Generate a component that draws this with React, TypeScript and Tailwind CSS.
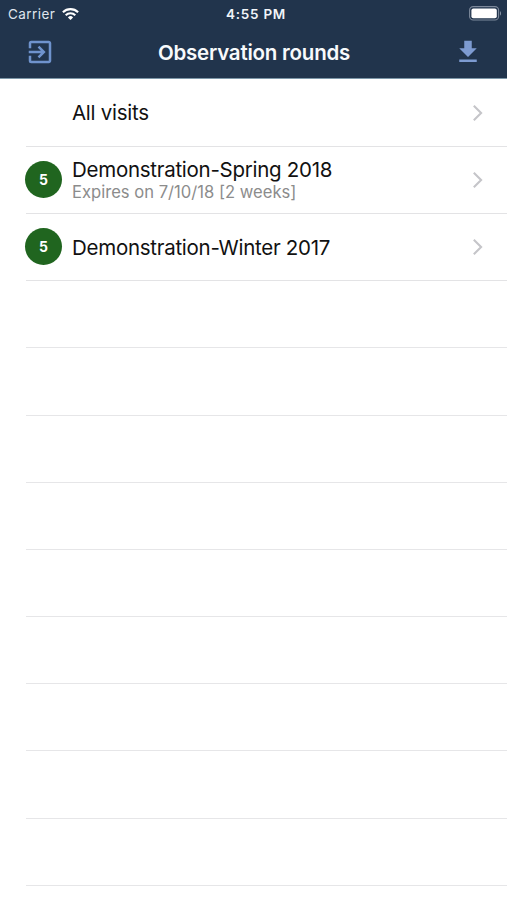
import { MdExitToApp, MdFileDownload } from 'react-icons/md';

interface Round {
  id: string;
  title: string;
  subtitle?: string;
  count?: number;
}

const rounds: Round[] = [
  { id: 'all', title: 'All visits' },
  {
    id: 'spring-2018',
    title: 'Demonstration-Spring 2018',
    subtitle: 'Expires on 7/10/18 [2 weeks]',
    count: 5,
  },
  { id: 'winter-2017', title: 'Demonstration-Winter 2017', count: 5 },
];

// The table keeps drawing separators below the last round
const EMPTY_ROWS = 9;

function WifiIcon() {
  return (
    <svg width="17" height="12" viewBox="0 0 17 12" fill="none" stroke="#fff" strokeWidth="2.1">
      <path d="M0.9 4.3a10.8 10.8 0 0 1 15.2 0" />
      <path d="M3.7 7.3a6.8 6.8 0 0 1 9.6 0" />
      <path d="M8.5 12L5.9 9.4a3.7 3.7 0 0 1 5.2 0z" fill="#fff" stroke="none" />
    </svg>
  );
}

function BatteryIcon() {
  return (
    <svg width="34" height="15" viewBox="0 0 34 15" fill="none">
      <rect x="0.6" y="0.6" width="29" height="13.4" rx="3.6" stroke="#7d899b" strokeWidth="1.1" />
      <rect x="2.4" y="2.4" width="25.4" height="9.8" rx="2" fill="#fff" />
      <path d="M31 5.2c1.3.5 1.3 3.9 0 4.4z" fill="#8b97a8" />
    </svg>
  );
}

function Chevron() {
  return (
    <svg width="12" height="18" viewBox="0 0 12 18" fill="none" className="shrink-0">
      <path d="M1.8 1.8L9.1 9l-7.3 7.2" stroke="#c5c5c9" strokeWidth="2.1" />
    </svg>
  );
}

function StatusBar() {
  return (
    <div className="grid h-[27px] grid-cols-3 items-center text-[13.5px] leading-none">
      <div className="flex items-center gap-[7px] pl-[8px] text-[#dfe5ed]">
        <span className="pt-[2px] tracking-[0.45px]">Carrier</span>
        <WifiIcon />
      </div>
      <div className="pt-[2px] pl-[5px] text-center text-[13.5px] font-semibold tracking-[0.75px] text-[#f2f5f9]">
        4:55 PM
      </div>
      <div className="flex justify-end pr-[4px]">
        <BatteryIcon />
      </div>
    </div>
  );
}

function NavBar() {
  return (
    <div className="flex h-[51px] items-center justify-between pr-[24px] pl-[25px]">
      <button aria-label="Log out" className="pb-[2px]">
        <MdExitToApp className="size-[30px] text-[#6f93cd]" />
      </button>
      <h1 className="pt-[2px] text-[20.5px] font-semibold tracking-[-0.22px] text-[#f8fafc]">
        Observation rounds
      </h1>
      <button aria-label="Download" className="pb-[2px]">
        <MdFileDownload className="size-[30px] text-[#7d9bd1]" />
      </button>
    </div>
  );
}

function RoundRow({ round }: { round: Round }) {
  return (
    <li className="flex h-[67.2px] items-center border-b border-[#e3e3e5] pr-[23px]">
      <div className="w-[46px] shrink-0 pb-[1.5px]">
        {round.count !== undefined && (
          <div className="-ml-px flex size-[37px] items-center justify-center rounded-full bg-[#20651f] text-[14px] font-bold text-white">
            {round.count}
          </div>
        )}
      </div>
      <div className="min-w-0 flex-1 pt-px whitespace-nowrap">
        <p className="text-[20.5px] leading-[24px] tracking-[-0.27px] text-[#111]">
          {round.title}
        </p>
        {round.subtitle && (
          <p className="text-[16.6px] leading-[20px] text-[#8c8c8c]">{round.subtitle}</p>
        )}
      </div>
      <Chevron />
    </li>
  );
}

export default function App() {
  return (
    <div className="h-[900px] w-full overflow-hidden bg-white font-['Inter',sans-serif]">
      <header className="h-[79px] border-b border-[#7d97a8] bg-[#21344c] text-white">
        <StatusBar />
        <NavBar />
      </header>
      <ul className="pt-[0.6px] pl-[26px]">
        {rounds.map((round) => (
          <RoundRow key={round.id} round={round} />
        ))}
        {Array.from({ length: EMPTY_ROWS }, (_, i) => (
          <li key={i} className="h-[67.2px] border-b border-[#e6e6e8]" />
        ))}
      </ul>
    </div>
  );
}
